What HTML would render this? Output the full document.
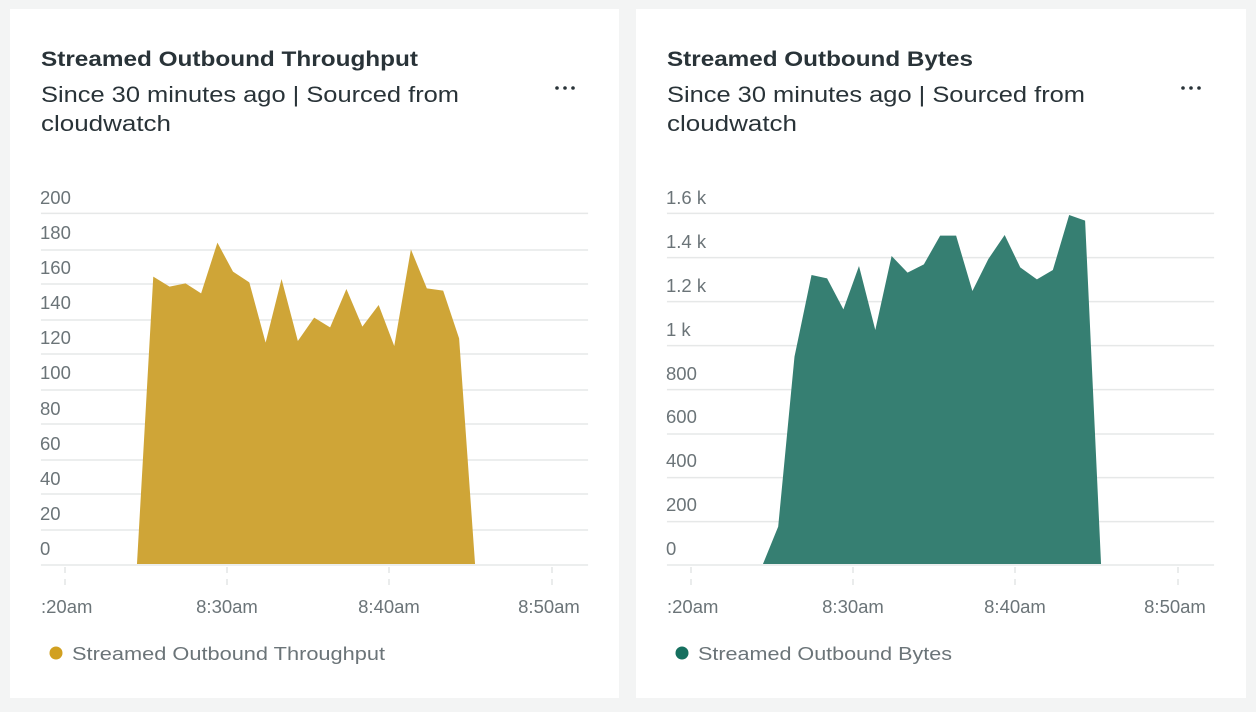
<!DOCTYPE html>
<html><head><meta charset="utf-8"><style>
html,body{margin:0;padding:0;background:#f3f4f4;}
svg{display:block;font-family:"Liberation Sans",sans-serif;}
</style></head><body>
<svg width="1256" height="712" viewBox="0 0 1256 712" xmlns="http://www.w3.org/2000/svg">
<rect width="1256" height="712" fill="#f3f4f4"/>
<rect x="10" y="9" width="609" height="689" fill="#fff"/>
<rect x="636" y="9" width="610" height="689" fill="#fff"/>

<!-- LEFT -->
<g>
<text x="41" y="66" font-size="21" font-weight="bold" fill="#293338" textLength="377" lengthAdjust="spacingAndGlyphs">Streamed Outbound Throughput</text>
<text x="41" y="102" font-size="22.5" fill="#293338" textLength="418" lengthAdjust="spacingAndGlyphs">Since 30 minutes ago | Sourced from</text>
<text x="41" y="131" font-size="22.5" fill="#293338" textLength="130" lengthAdjust="spacingAndGlyphs">cloudwatch</text>
<circle cx="557" cy="88" r="1.8" fill="#293338"/><circle cx="565" cy="88" r="1.8" fill="#293338"/><circle cx="573" cy="88" r="1.8" fill="#293338"/>
<svg x="30.8" y="180" width="566" height="400" viewBox="0 0 1562 1200" preserveAspectRatio="none">
<g stroke="#e6e8e8" stroke-width="1.5">
<line x1="28" x2="1538" y1="100" y2="100" vector-effect="non-scaling-stroke"/>
<line x1="28" x2="1538" y1="210" y2="210" vector-effect="non-scaling-stroke"/>
<line x1="28" x2="1538" y1="312" y2="312" vector-effect="non-scaling-stroke"/>
<line x1="28" x2="1538" y1="420" y2="420" vector-effect="non-scaling-stroke"/>
<line x1="28" x2="1538" y1="522" y2="522" vector-effect="non-scaling-stroke"/>
<line x1="28" x2="1538" y1="630" y2="630" vector-effect="non-scaling-stroke"/>
<line x1="28" x2="1538" y1="732" y2="732" vector-effect="non-scaling-stroke"/>
<line x1="28" x2="1538" y1="840" y2="840" vector-effect="non-scaling-stroke"/>
<line x1="28" x2="1538" y1="942" y2="942" vector-effect="non-scaling-stroke"/>
<line x1="28" x2="1538" y1="1050" y2="1050" vector-effect="non-scaling-stroke"/>
<line x1="28" x2="1538" y1="1155" y2="1155" vector-effect="non-scaling-stroke"/>
</g>
<polygon fill="#cfa537" points="293,1152 338,290 383,320 427,310 470,340 515,188 558,275 603,307 648,488 692,297 737,483 782,413 826,442 871,327 915,440 960,375 1003,498 1049,208 1093,325 1138,332 1182,475 1226,1152"/>
</svg>
<g stroke="#e3e6e6" stroke-width="1.5" stroke-dasharray="6 6"><line x1="65" x2="65" y1="567" y2="589"/><line x1="227" x2="227" y1="567" y2="589"/><line x1="389" x2="389" y1="567" y2="589"/><line x1="552" x2="552" y1="567" y2="589"/></g>
<g font-size="18.5" fill="#6b7478">
<text x="40" y="204">200</text><text x="40" y="239">180</text><text x="40" y="274">160</text><text x="40" y="309">140</text><text x="40" y="344">120</text><text x="40" y="379">100</text><text x="40" y="415">80</text><text x="40" y="450">60</text><text x="40" y="485">40</text><text x="40" y="520">20</text><text x="40" y="555">0</text>
<text x="41" y="613">:20am</text><text x="227" y="613" text-anchor="middle">8:30am</text><text x="389" y="613" text-anchor="middle">8:40am</text><text x="549" y="613" text-anchor="middle">8:50am</text>
<text x="72" y="660" textLength="313" lengthAdjust="spacingAndGlyphs">Streamed Outbound Throughput</text>
</g>
<circle cx="56" cy="653" r="6.5" fill="#d1a020"/>
</g>

<!-- RIGHT -->
<g transform="translate(626,0)">
<text x="41" y="66" font-size="21" font-weight="bold" fill="#293338" textLength="306" lengthAdjust="spacingAndGlyphs">Streamed Outbound Bytes</text>
<text x="41" y="102" font-size="22.5" fill="#293338" textLength="418" lengthAdjust="spacingAndGlyphs">Since 30 minutes ago | Sourced from</text>
<text x="41" y="131" font-size="22.5" fill="#293338" textLength="130" lengthAdjust="spacingAndGlyphs">cloudwatch</text>
<circle cx="557" cy="88" r="1.8" fill="#293338"/><circle cx="565" cy="88" r="1.8" fill="#293338"/><circle cx="573" cy="88" r="1.8" fill="#293338"/>
<svg x="30.8" y="180" width="566" height="400" viewBox="0 0 1562 1200" preserveAspectRatio="none">
<g stroke="#e6e8e8" stroke-width="1.5">
<line x1="28" x2="1538" y1="100" y2="100" vector-effect="non-scaling-stroke"/>
<line x1="28" x2="1538" y1="233" y2="233" vector-effect="non-scaling-stroke"/>
<line x1="28" x2="1538" y1="365" y2="365" vector-effect="non-scaling-stroke"/>
<line x1="28" x2="1538" y1="497" y2="497" vector-effect="non-scaling-stroke"/>
<line x1="28" x2="1538" y1="629" y2="629" vector-effect="non-scaling-stroke"/>
<line x1="28" x2="1538" y1="762" y2="762" vector-effect="non-scaling-stroke"/>
<line x1="28" x2="1538" y1="893" y2="893" vector-effect="non-scaling-stroke"/>
<line x1="28" x2="1538" y1="1025" y2="1025" vector-effect="non-scaling-stroke"/>
<line x1="28" x2="1538" y1="1155" y2="1155" vector-effect="non-scaling-stroke"/>
</g>
<polygon fill="#367f72" points="293,1152 335,1040 380,530 427,285 470,295 515,388 558,258 603,450 648,228 692,278 737,253 782,167 826,167 871,333 915,237 960,165 1003,262 1049,298 1093,270 1138,105 1182,122 1226,1152"/>
</svg>
<g stroke="#e3e6e6" stroke-width="1.5" stroke-dasharray="6 6"><line x1="65" x2="65" y1="567" y2="589"/><line x1="227" x2="227" y1="567" y2="589"/><line x1="389" x2="389" y1="567" y2="589"/><line x1="552" x2="552" y1="567" y2="589"/></g>
<g font-size="18.5" fill="#6b7478">
<text x="40" y="204">1.6 k</text><text x="40" y="248">1.4 k</text><text x="40" y="292">1.2 k</text><text x="40" y="336">1 k</text><text x="40" y="380">800</text><text x="40" y="423">600</text><text x="40" y="467">400</text><text x="40" y="511">200</text><text x="40" y="555">0</text>
<text x="41" y="613">:20am</text><text x="227" y="613" text-anchor="middle">8:30am</text><text x="389" y="613" text-anchor="middle">8:40am</text><text x="549" y="613" text-anchor="middle">8:50am</text>
<text x="72" y="660" textLength="254" lengthAdjust="spacingAndGlyphs">Streamed Outbound Bytes</text>
</g>
<circle cx="56" cy="653" r="6.5" fill="#16705f"/>
</g>
</svg>
</body></html>
